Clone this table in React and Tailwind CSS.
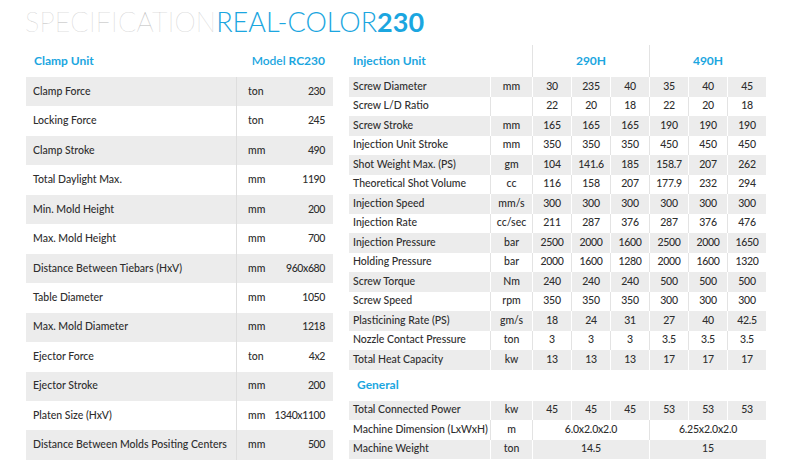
import React from 'react';

const clamp = [
  ['Clamp Force', 'ton', '230'],
  ['Locking Force', 'ton', '245'],
  ['Clamp Stroke', 'mm', '490'],
  ['Total Daylight Max.', 'mm', '1190'],
  ['Min. Mold Height', 'mm', '200'],
  ['Max. Mold Height', 'mm', '700'],
  ['Distance Between Tiebars (HxV)', 'mm', '960x680'],
  ['Table Diameter', 'mm', '1050'],
  ['Max. Mold Diameter', 'mm', '1218'],
  ['Ejector Force', 'ton', '4x2'],
  ['Ejector Stroke', 'mm', '200'],
  ['Platen Size (HxV)', 'mm', '1340x1100'],
  ['Distance Between Molds Positing Centers', 'mm', '500'],
];

const injection = [
  ['Screw Diameter', 'mm', '30', '235', '40', '35', '40', '45'],
  ['Screw L/D Ratio', '', '22', '20', '18', '22', '20', '18'],
  ['Screw Stroke', 'mm', '165', '165', '165', '190', '190', '190'],
  ['Injection Unit Stroke', 'mm', '350', '350', '350', '450', '450', '450'],
  ['Shot Weight Max. (PS)', 'gm', '104', '141.6', '185', '158.7', '207', '262'],
  ['Theoretical Shot Volume', 'cc', '116', '158', '207', '177.9', '232', '294'],
  ['Injection Speed', 'mm/s', '300', '300', '300', '300', '300', '300'],
  ['Injection Rate', 'cc/sec', '211', '287', '376', '287', '376', '476'],
  ['Injection Pressure', 'bar', '2500', '2000', '1600', '2500', '2000', '1650'],
  ['Holding Pressure', 'bar', '2000', '1600', '1280', '2000', '1600', '1320'],
  ['Screw Torque', 'Nm', '240', '240', '240', '500', '500', '500'],
  ['Screw Speed', 'rpm', '350', '350', '350', '300', '300', '300'],
  ['Plasticining Rate (PS)', 'gm/s', '18', '24', '31', '27', '40', '42.5'],
  ['Nozzle Contact Pressure', 'ton', '3', '3', '3', '3.5', '3.5', '3.5'],
  ['Total Heat Capacity', 'kw', '13', '13', '13', '17', '17', '17'],
];

const general = [
  ['Total Connected Power', 'kw', '45', '45', '45', '53', '53', '53'],
  ['Machine Dimension (LxWxH)', 'm', '6.0x2.0x2.0', '6.25x2.0x2.0'],
  ['Machine Weight', 'ton', '14.5', '15'],
];

function InjRow({ row, gray }) {
  const [label, unit, ...vals] = row;
  const line = gray ? 'border-white' : 'border-[#e3e3e3]';
  const merged = vals.length === 2;
  return (
    <div className={`grid grid-cols-[141px_42px_repeat(6,39px)] h-[19.5px] items-stretch ${gray ? 'bg-[#ececec]' : 'bg-white'}`}>
      <div className="flex items-center pl-[4px] whitespace-nowrap">{label}</div>
      <div className={`flex items-center justify-center border-l ${line}`}>{unit}</div>
      {merged
        ? vals.map((v, i) => (
            <div key={i} className={`col-span-3 flex items-center justify-center tracking-[-0.2px] border-l ${line}`}>{v}</div>
          ))
        : vals.map((v, i) => (
            <div key={i} className={`flex items-center justify-center tracking-[-0.3px] border-l ${line}`}>{v}</div>
          ))}
    </div>
  );
}

export default function App() {
  return (
    <div className="w-[800px] h-[476px] bg-white overflow-hidden font-['Lato',sans-serif] text-[10.5px] font-medium text-[#2e2e2e]">
      {/* Title */}
      <div className="h-[45px] pl-[25px] flex items-center pb-[3px]">
        <span className="text-[27px] leading-none tracking-[0.2px] font-extralight text-[#bdbdbd]">SPECIFICATION</span>
        <span className="text-[27px] leading-none font-light text-[#1ba6e0]">REAL-COLOR</span>
        <span className="text-[27px] leading-none font-bold text-[#1ba6e0]">230</span>
      </div>

      <div className="flex pl-[26px] gap-[16px]">
        {/* Clamp unit */}
        <div className="w-[307px]">
          <div className="h-[32px] flex items-center justify-between pl-[8px] pr-[8px] text-[12px] font-bold text-[#1ba6e0]">
            <span>Clamp Unit</span>
            <span>
              <span className="font-semibold">Model </span>RC230
            </span>
          </div>
          {clamp.map((r, i) => (
            <div key={r[0]} className={`flex h-[29.46px] ${i % 2 === 0 ? 'bg-[#ececec]' : 'bg-white'}`}>
              <div className="w-[210px] flex items-center pl-[7px] whitespace-nowrap">{r[0]}</div>
              <div className="flex-1 flex items-center justify-between border-l border-[#dedede] pl-[11px] pr-[8px]">
                <span>{r[1]}</span>
                <span className="tracking-[-0.4px]">{r[2]}</span>
              </div>
            </div>
          ))}
        </div>

        {/* Injection unit */}
        <div className="w-[417px]">
          <div className="grid grid-cols-[183px_117px_117px] h-[32px] text-[12px] font-bold text-[#1ba6e0]">
            <div className="flex items-center pl-[4px]">Injection Unit</div>
            <div className="flex items-center justify-center border-l border-[#e3e3e3]">290H</div>
            <div className="flex items-center justify-center border-l border-[#e3e3e3]">490H</div>
          </div>
          {injection.map((r, i) => (
            <InjRow key={r[0]} row={r} gray={i % 2 === 0} />
          ))}
          <div className="h-[31px] flex items-center pl-[8px] text-[12px] font-bold text-[#1ba6e0]">General</div>
          {general.map((r, i) => (
            <InjRow key={r[0]} row={r} gray={i % 2 === 0} />
          ))}
        </div>
      </div>
    </div>
  );
}
